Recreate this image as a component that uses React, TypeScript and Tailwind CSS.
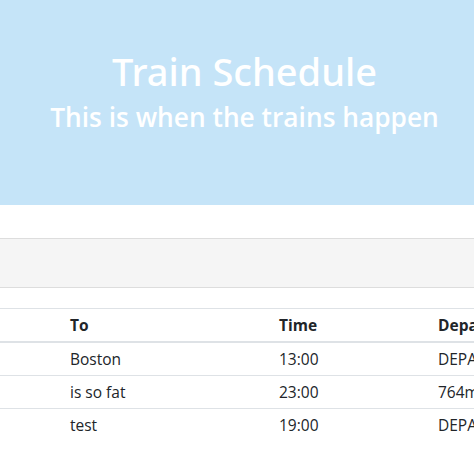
const rows = [
    { to: "Boston", time: "13:00", dep: "DEPARTED" },
    { to: "is so fat", time: "23:00", dep: "764min" },
    { to: "test", time: "19:00", dep: "DEPARTED" },
];

const App = () => {
    return (
        <div className="w-[474px] h-[473px] overflow-hidden bg-white text-[#212529] font-['Open_Sans',sans-serif]">
            <div className="w-[489px]">
                <header className="h-[205px] bg-[#c5e4f8] flex flex-col items-center pt-[47px] text-white">
                    <h1 className="text-[38px] leading-[48px] font-medium font-['Noto_Sans',sans-serif]">Train Schedule</h1>
                    <h2 className="text-[26.3px] leading-[32px] font-semibold mt-[6px]">This is when the trains happen</h2>
                </header>

                <div className="mt-[33px] h-[50px] bg-[#f5f5f5] border-y border-[#dddddd]" />

                <table className="mt-[20px] w-[640px] border-collapse text-[15.5px] text-left">
                    <thead>
                        <tr className="border-t border-b-2 border-[#dee2e6]">
                            <th className="w-[70px] p-0" />
                            <th className="w-[209px] px-0 py-[4px] leading-[24px] font-bold">To</th>
                            <th className="w-[159px] px-0 py-[4px] leading-[24px] font-bold">Time</th>
                            <th className="px-0 py-[4px] leading-[24px] font-bold">Departure</th>
                        </tr>
                    </thead>
                    <tbody>
                        {rows.map((r) => (
                            <tr key={r.to} className="border-b border-[#dee2e6] last:border-b-0">
                                <td className="p-0" />
                                <td className="px-0 py-[4px] leading-[24px]">{r.to}</td>
                                <td className="px-0 py-[4px] leading-[24px]">{r.time}</td>
                                <td className="px-0 py-[4px] leading-[24px]">{r.dep}</td>
                            </tr>
                        ))}
                    </tbody>
                </table>
            </div>
        </div>
    );
};

export default App;
